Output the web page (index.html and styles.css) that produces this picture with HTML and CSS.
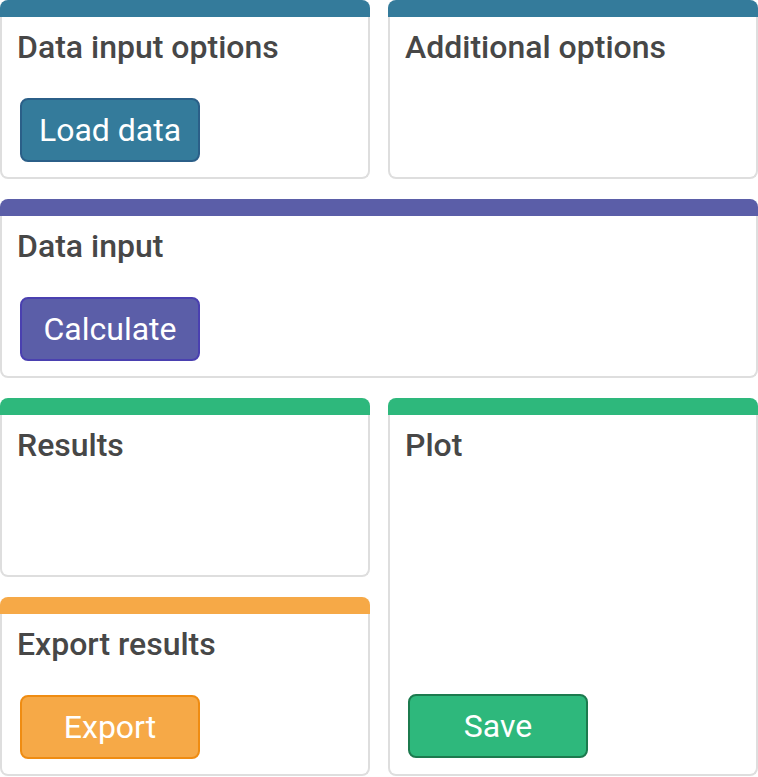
FILE: index.html
```html
<!DOCTYPE html>
<html>
<head>
<meta charset="utf-8">
<link rel="stylesheet" href="styles.css">
</head>
<body>
<div class="grid">
  <section class="card teal">
    <div class="bar"></div>
    <div class="body">
      <h2>Data input options</h2>
      <button class="btn">Load data</button>
    </div>
  </section>
  <section class="card teal">
    <div class="bar"></div>
    <div class="body">
      <h2>Additional options</h2>
    </div>
  </section>
  <section class="card purple wide">
    <div class="bar"></div>
    <div class="body">
      <h2>Data input</h2>
      <button class="btn">Calculate</button>
    </div>
  </section>
  <section class="card green">
    <div class="bar"></div>
    <div class="body">
      <h2>Results</h2>
    </div>
  </section>
  <section class="card green tall">
    <div class="bar"></div>
    <div class="body">
      <h2>Plot</h2>
      <button class="btn bottom">Save</button>
    </div>
  </section>
  <section class="card orange">
    <div class="bar"></div>
    <div class="body">
      <h2>Export results</h2>
      <button class="btn">Export</button>
    </div>
  </section>
</div>
</body>
</html>
```
FILE: styles.css
```css
html, body {
  margin: 0;
  padding: 0;
  background: #fff;
}
body {
  font-family: Roboto, "Liberation Sans", sans-serif;
}
.grid {
  display: grid;
  grid-template-columns: 370px 370px;
  grid-template-rows: repeat(4, 179px);
  column-gap: 18px;
  row-gap: 20px;
}
.wide {
  grid-column: 1 / 3;
}
.tall {
  grid-column: 2;
  grid-row: 3 / 5;
}
.card {
  display: flex;
  flex-direction: column;
  --c: #347b9b;
  --b: #2b5f88;
}
.card.teal { --c: #347b9b; --b: #2b5f88; }
.card.purple { --c: #5b5ea8; --b: #4a40b0; }
.card.green { --c: #2eb87c; --b: #1c7a4e; }
.card.orange { --c: #f6a947; --b: #ef8c12; }
.bar {
  height: 17px;
  background: var(--c);
  border-radius: 8px 8px 0 0;
  flex: none;
}
.body {
  flex: 1;
  display: flex;
  flex-direction: column;
  align-items: flex-start;
  border: 2px solid #dedede;
  border-top: 0;
  border-radius: 0 0 8px 8px;
  padding: 12px 15px 15px 15px;
}
h2 {
  margin: 0;
  font-size: 32px;
  font-weight: 500;
  color: #474747;
  line-height: 37px;
}
.btn {
  margin: 32px 0 0 3px;
  width: 180px;
  height: 64px;
  box-sizing: border-box;
  border: 2px solid var(--b);
  border-radius: 8px;
  background: var(--c);
  color: #fff;
  font-family: Roboto, "Liberation Sans", sans-serif;
  font-size: 32px;
  font-weight: 400;
  padding: 0;
}
.btn.bottom {
  margin-top: auto;
  margin-bottom: 1px;
}
```
